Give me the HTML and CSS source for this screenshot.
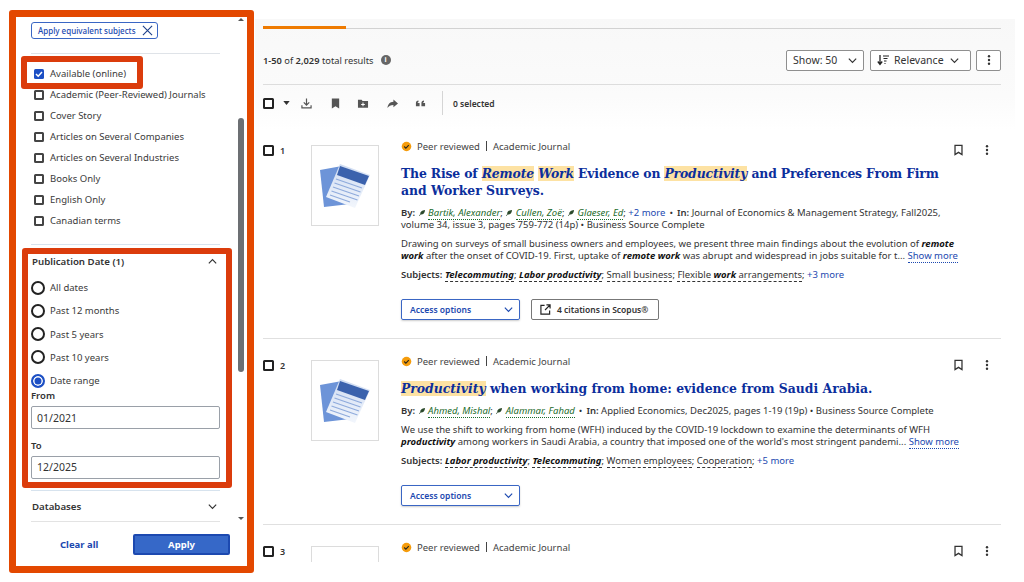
FILE: index.html
```html
<!DOCTYPE html>
<html lang="en">
<head>
<meta charset="utf-8">
<title>Search results</title>
<link rel="stylesheet" href="styles.css">
</head>
<body>
<svg class="sprites" width="0" height="0" aria-hidden="true">
  <defs>
    <linearGradient id="sheet" x1="0" y1="0" x2="0" y2="1"><stop offset="0" stop-color="#cfdcf2"/><stop offset="1" stop-color="#f2f6fc"/></linearGradient>
  </defs>
  <symbol id="i-down" viewBox="0 0 12 12"><path d="M2 4l4 4 4-4" fill="none" stroke="currentColor" stroke-width="1.3"/></symbol>
  <symbol id="i-up" viewBox="0 0 12 12"><path d="M2 8l4-4 4 4" fill="none" stroke="currentColor" stroke-width="1.3"/></symbol>
  <symbol id="i-dots" viewBox="0 0 12 12"><circle cx="6" cy="2.2" r="1.2"/><circle cx="6" cy="6" r="1.2"/><circle cx="6" cy="9.8" r="1.2"/></symbol>
  <symbol id="i-mark" viewBox="0 0 12 12"><path d="M2.2 1h7.6v10L6 8.6 2.2 11z" fill="none" stroke="currentColor" stroke-width="1.4"/></symbol>
  <symbol id="i-badge" viewBox="0 0 12 12"><circle cx="6" cy="6" r="5.2" fill="#f59c0c"/><path d="M3.5 6l1.8 1.8 3.2-3.4" fill="none" stroke="#26261e" stroke-width="1.2"/></symbol>
  <symbol id="i-leaf" viewBox="0 0 8 8"><path d="M.5 7.5L2 6C1.500 3.500 3.500 1.500 7.500 1 7.300 4.500 5 6.700 2.600 6.300L1 8z"/></symbol>
  <symbol id="i-doc" viewBox="0 0 66 79">
    <path d="M8 24l22-4 8 38-26 3z" fill="#6d94d8"/>
    <path d="M28 18l30 11-15 33-29-11z" fill="url(#sheet)"/>
    <path d="M28 20l29 10-4 9-28-10z" fill="#3b62ad"/>
    <path d="M24 33l26 9M22.500 37l26 9M21 41l26 9M19.500 45l26 9M18 49l20 7" stroke="#8fabdc" stroke-width="1.200"/>
  </symbol>
</svg>
<div class="page">
  <aside class="panel">
    <div class="panel-scroll">
      <button class="chip" type="button">Apply equivalent subjects
        <svg class="chip-x" viewBox="0 0 12 12"><path d="M1 1l10 10M11 1L1 11" fill="none" stroke="currentColor" stroke-width="1.200"/></svg>
      </button>
      <hr class="rule rule-top">
      <ul class="checks">
        <li class="check-row"><span class="box box-on"><svg viewBox="0 0 10 10"><path d="M2 5l2.200 2.200L8 3" fill="none" stroke="#fff" stroke-width="1.500"/></svg></span>Available (online)</li>
        <li class="check-row"><span class="box"></span>Academic (Peer-Reviewed) Journals</li>
        <li class="check-row"><span class="box"></span>Cover Story</li>
        <li class="check-row"><span class="box"></span>Articles on Several Companies</li>
        <li class="check-row"><span class="box"></span>Articles on Several Industries</li>
        <li class="check-row"><span class="box"></span>Books Only</li>
        <li class="check-row"><span class="box"></span>English Only</li>
        <li class="check-row"><span class="box"></span>Canadian terms</li>
      </ul>
      <hr class="rule rule-dates">
      <section class="dates">
        <div class="group-head">Publication Date (1)<svg class="chev"><use href="#i-up"/></svg></div>
        <div class="radios">
          <div class="radio-row"><span class="radio"></span>All dates</div>
          <div class="radio-row"><span class="radio"></span>Past 12 months</div>
          <div class="radio-row"><span class="radio"></span>Past 5 years</div>
          <div class="radio-row"><span class="radio"></span>Past 10 years</div>
          <div class="radio-row"><span class="radio radio-on"></span>Date range</div>
        </div>
        <label class="field-label label-from">From</label>
        <div class="field">01/2021</div>
        <label class="field-label label-to">To</label>
        <div class="field">12/2025</div>
      </section>
      <hr class="rule rule-db">
      <div class="group-head group-db">Databases<svg class="chev"><use href="#i-down"/></svg></div>
      <hr class="rule rule-end">
    </div>
    <div class="panel-foot">
      <a class="clear">Clear all</a>
      <button class="apply" type="button">Apply</button>
    </div>
    <span class="scroll-thumb"></span>
    <span class="scroll-arrow arrow-up"></span>
    <span class="scroll-arrow arrow-down"></span>
    <span class="callout callout-online"></span>
    <span class="callout callout-dates"></span>
  </aside>

  <main class="results">
    <div class="top-band">
      <div class="tabs"><span class="tab-active"></span></div>
      <div class="summary">
        <div class="count"><span><b>1-50</b> of <b>2,029</b> total results</span><span class="info">i</span></div>
        <div class="controls">
          <div class="select sel-show">Show: 50<svg class="chev"><use href="#i-down"/></svg></div>
          <div class="select sel-sort">
            <svg class="sort-icon" viewBox="0 0 12 12"><path d="M3 1v9M.8 7.500L3 10.500l2.200-3" fill="none" stroke="#222" stroke-width="1.300"/><path d="M6 2h6M6.500 4.500h4M7 7h2.500M7.500 9.500h1" stroke="#222" stroke-width="1.100"/></svg>
            <span class="sort-text">Relevance</span><svg class="chev"><use href="#i-down"/></svg>
          </div>
          <div class="select sel-more"><svg class="ico-dots"><use href="#i-dots"/></svg></div>
        </div>
      </div>
      <div class="tools">
        <span class="box box-lg"></span>
        <svg class="caret" viewBox="0 0 8 5"><path d="M0 0h8L4 5z"/></svg>
        <svg class="tool t1" viewBox="0 0 12 12"><path d="M6 .500v7M3 4.800L6 7.800l3-3M1 8v2.800h10V8" fill="none" stroke="#555" stroke-width="1.300"/></svg>
        <svg class="tool t2" viewBox="0 0 12 12"><path d="M2 .500h8v11L6 9l-4 2.500z" fill="#555"/></svg>
        <svg class="tool t3" viewBox="0 0 12 12"><path d="M.500 2h4l1 1.300h6v7.200H.500z" fill="#555"/><path d="M6 5v4M4 7h4" stroke="#fff" stroke-width="1.100"/></svg>
        <svg class="tool t4" viewBox="0 0 12 12"><path d="M7 1.500L12 6 7 10V7.500C4 7.500 2 8.500.500 10.800 1 7 3 4.500 7 4.200z" fill="#555"/></svg>
        <svg class="tool t5" viewBox="0 0 12 12"><path d="M1 9V5.500C1 4 2 3 3.800 2.800v1.500C3 4.500 2.800 5 2.800 5.500H5V9zM7 9V5.500C7 4 8 3 9.800 2.800v1.500C9 4.500 8.800 5 8.800 5.500H11V9z" fill="#555"/></svg>
        <span class="tool-sep"></span>
        <span class="selected">0 selected</span>
      </div>
    </div>

    <article class="result r1">
      <div class="num-col"><span class="box box-lg"></span><b>1</b></div>
      <div class="thumb"><svg class="doc"><use href="#i-doc"/></svg></div>
      <div class="body">
        <div class="meta"><svg class="badge"><use href="#i-badge"/></svg>Peer reviewed<span class="pipe"></span>Academic Journal</div>
        <h2 class="title"><span class="title-tight">The Rise of <mark>Remote</mark> <mark>Work</mark> Evidence on <mark>Productivity</mark> and Preferences From Firm</span> and Worker Surveys.</h2>
        <p class="line by"><b>By:</b> <svg class="leaf"><use href="#i-leaf"/></svg> <a class="auth">Bartik, Alexander</a>; <svg class="leaf"><use href="#i-leaf"/></svg> <a class="auth">Cullen, Zoë</a>; <svg class="leaf"><use href="#i-leaf"/></svg> <a class="auth">Glaeser, Ed</a>; <a class="more">+2 more</a><span class="sep">•</span><b>In:</b> Journal of Economics &amp; Management Strategy, Fall2025, volume 34, issue 3, pages 759-772 (14p) • Business Source Complete</p>
        <p class="line abstract">Drawing on surveys of small business owners and employees, we present three main findings about the evolution of <em>remote work</em> after the onset of COVID-19. First, uptake of <em>remote work</em> was abrupt and widespread in jobs suitable for t... <a class="show">Show more</a></p>
        <p class="line subjects"><b>Subjects:</b> <a class="subj"><em>Telecommuting</em></a>; <a class="subj"><em>Labor productivity</em></a>; <a class="subj">Small business</a>; <a class="subj">Flexible <em>work</em> arrangements</a>; <a class="more">+3 more</a></p>
        <div class="actions">
          <div class="access">Access options<svg class="chev"><use href="#i-down"/></svg></div>
          <div class="scopus"><svg class="ext" viewBox="0 0 12 12"><path d="M5 1.500H1v9.500h9.500V7M7 1h4v4M11 1L5.500 6.500" fill="none" stroke="#222" stroke-width="1.300"/></svg>4 citations in Scopus®</div>
        </div>
      </div>
      <div class="side"><svg class="ico-mark"><use href="#i-mark"/></svg><svg class="ico-dots"><use href="#i-dots"/></svg></div>
    </article>

    <article class="result r2">
      <div class="num-col"><span class="box box-lg"></span><b>2</b></div>
      <div class="thumb"><svg class="doc"><use href="#i-doc"/></svg></div>
      <div class="body">
        <div class="meta"><svg class="badge"><use href="#i-badge"/></svg>Peer reviewed<span class="pipe"></span>Academic Journal</div>
        <h2 class="title"><mark>Productivity</mark> when working from home: evidence from Saudi Arabia.</h2>
        <p class="line by"><b>By:</b> <svg class="leaf"><use href="#i-leaf"/></svg> <a class="auth">Ahmed, Mishal</a>; <svg class="leaf"><use href="#i-leaf"/></svg> <a class="auth">Alammar, Fahad</a><span class="sep">•</span><b>In:</b> Applied Economics, Dec2025, pages 1-19 (19p) • Business Source Complete</p>
        <p class="line abstract">We use the shift to working from home (WFH) induced by the COVID-19 lockdown to examine the determinants of WFH <em>productivity</em> among workers in Saudi Arabia, a country that imposed one of the world's most stringent pandemi... <a class="show">Show more</a></p>
        <p class="line subjects"><b>Subjects:</b> <a class="subj"><em>Labor productivity</em></a>; <a class="subj"><em>Telecommuting</em></a>; <a class="subj">Women employees</a>; <a class="subj">Cooperation</a>; <a class="more">+5 more</a></p>
        <div class="actions">
          <div class="access">Access options<svg class="chev"><use href="#i-down"/></svg></div>
        </div>
      </div>
      <div class="side"><svg class="ico-mark"><use href="#i-mark"/></svg><svg class="ico-dots"><use href="#i-dots"/></svg></div>
    </article>

    <article class="result r3">
      <div class="num-col"><span class="box box-lg"></span><b>3</b></div>
      <div class="thumb"></div>
      <div class="body">
        <div class="meta"><svg class="badge"><use href="#i-badge"/></svg>Peer reviewed<span class="pipe"></span>Academic Journal</div>
      </div>
      <div class="side"><svg class="ico-mark"><use href="#i-mark"/></svg><svg class="ico-dots"><use href="#i-dots"/></svg></div>
    </article>
  </main>
</div>
</body>
</html>
```
FILE: styles.css
```css
* { box-sizing: border-box; }
html, body { margin: 0; padding: 0; background: #fff; }
body { font-family: "Noto Sans", "Open Sans", sans-serif; font-size: 9.5px; color: #333; }
.sprites { position: absolute; }
.page { width: 1024px; height: 582px; overflow: hidden; display: flex; align-items: flex-start; padding: 10px 0 0 9px; }

/* filter panel */
.panel { position: relative; flex: none; width: 245px; height: 563px; border: 7px solid #e34800; border-radius: 3px; background: #fff; display: flex; flex-direction: column; }
.panel-scroll { height: 510px; padding: 5px 0 0 15px; overflow: hidden; }
.chip { display: flex; align-items: center; gap: 6px; width: 127px; height: 17px; padding: 0 5px 0 6px; border: 1px solid #3a66c4; border-radius: 3px; background: #fff; color: #1c49b0; font: 500 8px "Noto Sans", sans-serif; white-space: nowrap; }
.chip-x { width: 11px; height: 11px; color: #1d3f8a; flex: none; }
.rule { height: 1px; width: 189px; margin: 0; border: 0; background: #dfe3e8; }
.rule-top { margin-top: 14px; }
.checks { list-style: none; margin: 9px 0 0; padding: 0; }
.check-row { height: 21px; display: flex; align-items: center; gap: 6px; padding-left: 3px; color: #3a3a3a; white-space: nowrap; }
.box { flex: none; display: block; width: 10px; height: 10px; border: 2px solid #444; border-radius: 1.5px; background: #fff; }
.box-on { border: 0; background: #1c4fc4; }
.box-on svg { display: block; width: 100%; height: 100%; }
.box-lg { width: 11px; height: 11px; border-color: #222; }
.rule-dates { margin-top: 13px; background: #d7e3ee; }
.dates { height: 245px; padding-top: 9px; }
.group-head { display: flex; align-items: center; justify-content: space-between; width: 189px; padding: 0 2px 0 1px; font-size: 9.700px; font-weight: 600; color: #333; }
.dates .group-head { height: 14px; }
.chev { width: 11px; height: 11px; flex: none; color: #333; }
.radios { margin-top: 8px; }
.radio-row { height: 23.250px; display: flex; align-items: center; gap: 5px; color: #3a3a3a; }
.radio { flex: none; width: 14px; height: 14px; border: 2px solid #222; border-radius: 50%; background: #fff; }
.radio-on { border-color: #1c4fc4; background: #1c4fc4; box-shadow: inset 0 0 0 1.5px #fff; }
.field-label { display: block; font-weight: 600; color: #333; height: 13px; line-height: 13px; }
.label-from { margin-top: -3px; }
.label-to { margin-top: 9.500px; }
.field { width: 189px; height: 23px; margin-top: 4px; padding-left: 5px; display: flex; align-items: center; border: 1px solid #9aa0a8; border-radius: 2px; font-size: 10.500px; color: #333; }
.rule-db { background: #d7e3ee; }
.group-db { height: 30px; }
.rule-end { background: #e3e3e3; }
.panel-foot { display: flex; align-items: center; padding: 0 0 0 44px; height: 35px; }
.clear { width: 40px; font-weight: 700; color: #1c49b0; white-space: nowrap; }
.apply { margin-left: 33px; width: 97px; height: 21px; border: 2px solid #1c49b0; border-radius: 2px; background: #3668c8; color: #fff; font: 700 9.500px "Noto Sans", sans-serif; }

/* overlays on the panel */
.scroll-thumb { position: absolute; left: 222px; top: 101px; width: 6px; height: 254px; border-radius: 3px; background: #6c6f73; }
.scroll-arrow { position: absolute; left: 222px; width: 0; height: 0; border-left: 3px solid transparent; border-right: 3px solid transparent; }
.arrow-up { top: 1px; border-bottom: 3px solid #555; }
.arrow-down { top: 500px; border-top: 3px solid #555; }
.callout { position: absolute; border: 6px solid #db3c0c; border-radius: 3px; }
.callout-online { left: 5px; top: 39px; width: 122px; height: 33px; }
.callout-dates { left: 6px; top: 231px; width: 210px; height: 240px; }

/* results */
.results { flex: none; width: 738px; margin: 9px 0 0 9px; }
.top-band { margin: 0 -14px 0 -8px; padding: 0 14px 0 8px; height: 111px; background: linear-gradient(#f8f8f8, #fbfbfb 70%, #fff); }
.tabs { position: relative; height: 10px; border-bottom: 1px solid #d2d2d2; }
.tab-active { position: absolute; left: 0; top: 7px; width: 83px; height: 3px; background: #ee7a00; }
.summary { display: flex; align-items: center; justify-content: space-between; height: 56px; padding-top: 7px; border-bottom: 1px solid #ddd; }
.count { display: flex; align-items: center; gap: 7px; font-size: 9.300px; color: #333; white-space: nowrap; }
.count b { font-weight: 600; }
.info { width: 10px; height: 10px; border-radius: 50%; background: #666; color: #fff; font: 700 7px/10px "Noto Sans", sans-serif; text-align: center; }
.controls { display: flex; gap: 5px; }
.select { height: 21px; display: flex; align-items: center; justify-content: space-between; border: 1px solid #8f8f8f; border-radius: 2px; background: #fff; font-size: 10.500px; color: #333; }
.sel-show { width: 78px; padding: 0 5px 0 6px; margin-right: 1px; }
.sel-sort { width: 101px; padding: 0 10px 0 6px; }
.sort-text { margin: 0 auto 0 5px; }
.sort-icon { width: 12px; height: 12px; flex: none; }
.sel-more { width: 25px; justify-content: center; }
.ico-dots { width: 12px; height: 12px; fill: #333; flex: none; }
.tools { display: flex; align-items: center; height: 36px; }
.caret { width: 7px; height: 4px; margin-left: 9px; fill: #333; }
.tool { width: 11px; height: 11px; flex: none; }
.t1 { margin-left: 11px; }
.t2 { margin-left: 18px; }
.t3 { width: 12px; margin-left: 16px; }
.t4 { margin-left: 18px; }
.t5 { margin-left: 17px; }
.tool-sep { width: 1px; height: 24px; margin-left: 16px; background: #d5d5d5; }
.selected { margin-left: 10px; font-size: 8.500px; font-weight: 600; color: #333; }

.result { display: flex; align-items: flex-start; border-bottom: 1px solid #e0e0e0; overflow: hidden; }
.r1 { height: 208px; margin-top: 1px; padding-top: 14px; }
.r2 { height: 186px; padding-top: 21px; }
.r3 { height: 37px; padding-top: 21px; border-bottom: 0; }
.num-col { flex: none; width: 48px; display: flex; align-items: center; gap: 6px; margin-top: -1px; font-size: 9px; color: #333; }
.num-col b { font-weight: 600; }
.thumb { flex: none; width: 68px; height: 81px; border: 1px solid #dcdcdc; margin-right: 22px; }
.doc { display: block; width: 66px; height: 79px; }
.body { flex: none; width: 560px; }
.meta { display: flex; align-items: center; height: 12px; margin-top: -5px; color: #444; white-space: nowrap; }
.badge { width: 11px; height: 11px; margin-right: 5px; flex: none; }
.pipe { width: 1px; height: 10px; margin: 0 6px; background: #444; }
.title { margin: 13px 0 0; font: 700 12.400px/17px "DejaVu Serif", "Liberation Serif", serif; color: #0b2e9c; }
.title-tight { letter-spacing: -0.150px; }
mark { background: #fde2a3; color: #0b2e9c; font-style: italic; }
.line { margin: 0; line-height: 12px; color: #333; }
.line b { font-weight: 600; }
.line em { font-style: italic; font-weight: 700; color: #111; }
.by { margin-top: 8px; }
.abstract { margin-top: 7px; }
.subjects { margin-top: 7px; }
.leaf { width: 8px; height: 7px; fill: #2c4a2c; }
.auth { font-style: italic; color: #1c6b2c; border-bottom: 1px dotted #1c6b2c; }
.more { color: #1c49b0; }
.sep { margin: 0 4px; }
.show { color: #1c49b0; border-bottom: 1px dotted #1c49b0; }
.subj { border-bottom: 1px dashed #333; }
.actions { display: flex; gap: 11px; margin-top: 18px; }
.access { width: 119px; height: 21px; padding: 0 5px 0 8px; display: flex; align-items: center; justify-content: space-between; border: 1px solid #3a66c4; border-radius: 2px; box-shadow: 0 1px 2px #ccc; font-size: 8.500px; font-weight: 600; color: #1c49b0; }
.access .chev { color: #1c49b0; }
.scopus { width: 128px; height: 21px; padding-left: 8px; display: flex; align-items: center; gap: 6px; border: 1px solid #777; border-radius: 2px; font-size: 8.500px; font-weight: 600; color: #333; white-space: nowrap; }
.ext { width: 11px; height: 11px; flex: none; }
.side { flex: none; display: flex; align-items: center; gap: 17px; margin: -1px 0 0 -8px; }
.ico-mark { width: 11px; height: 12px; color: #333; flex: none; }
```
